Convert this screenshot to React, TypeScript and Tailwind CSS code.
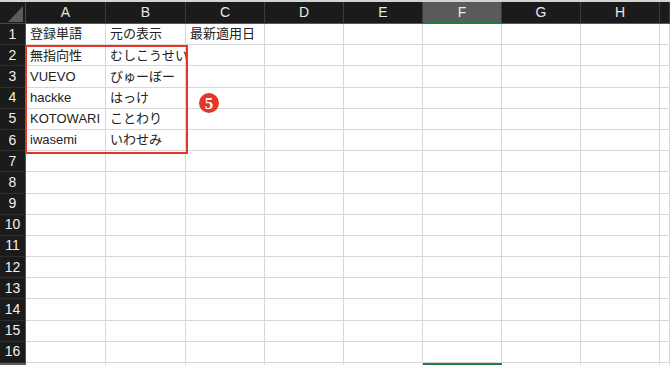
import React from "react";

const cols = [
  { l: "A", w: "w-[80px]" },
  { l: "B", w: "w-[80px]" },
  { l: "C", w: "w-[79px]" },
  { l: "D", w: "w-[79px]" },
  { l: "E", w: "w-[79px]" },
  { l: "F", w: "w-[79px]" },
  { l: "G", w: "w-[79px]" },
  { l: "H", w: "w-[79px]" },
  { l: "", w: "flex-1" },
];

const data: Record<number, string[]> = {
  1: ["登録単語", "元の表示", "最新適用日"],
  2: ["無指向性", "むしこうせい"],
  3: ["VUEVO", "びゅーぼー"],
  4: ["hackke", "はっけ"],
  5: ["KOTOWARI", "ことわり"],
  6: ["iwasemi", "いわせみ"],
};

const font = { fontFamily: '"Liberation Sans", "Noto Sans CJK JP", sans-serif' };

export default function App() {
  const rows = Array.from({ length: 17 }, (_, i) => i + 1);
  return (
    <div className="relative w-[670px] h-[365px] overflow-hidden bg-white" style={font}>
      <div className="h-[2px] bg-[#d4d4d4]" />
      {/* column header */}
      <div className="flex h-[22px] bg-[#1b1b1b]">
        <div className="relative w-[26px] shrink-0 border-r border-b border-[#4a4a4a]">
          <svg className="absolute left-[8px] top-[4px]" width="15" height="16" viewBox="0 0 15 16">
            <polygon points="0,16 15,16 15,0" fill="#5c5c5c" />
          </svg>
        </div>
        {cols.map((c, i) => (
          <div
            key={i}
            className={`${c.w} shrink-0 flex items-center justify-center text-[14px] text-[#e8e8e8] border-r border-[#3a3a3a] ${
              c.l === "F" ? "bg-[#5a5a5a] border-b-2 border-b-[#1f7a45]" : "border-b border-b-[#5a5a5a]"
            }`}
          >
            {c.l}
          </div>
        ))}
      </div>
      {/* rows */}
      {rows.map((r) => (
        <div key={r} className="flex h-[21.2px]">
          <div
            className={`w-[26px] shrink-0 flex items-center justify-center text-[14px] text-[#f0f0f0] border-b border-b-[#2e2e2e] ${
              r === 17 ? "bg-[#5a5a5a] border-r-2 border-r-[#1f7a45]" : "bg-[#1b1b1b] border-r border-r-[#555]"
            }`}
          >
            {r === 17 ? "" : r}
          </div>
          {cols.map((c, i) => {
            const sel = r === 17 && c.l === "F";
            return (
              <div
                key={i}
                className={`${c.w} shrink-0 flex items-center pl-[4px] text-[13px] text-[#222] whitespace-nowrap overflow-visible ${
                  sel ? "border-2 border-[#1f7a45]" : "border-r border-b border-[#d8d8d8]"
                }`}
              >
                {data[r]?.[i] ?? ""}
              </div>
            );
          })}
        </div>
      ))}
      {/* annotation box */}
      <div className="absolute left-[25px] top-[45px] w-[163px] h-[109px] border-[2.5px] border-[#e8352a]" />
      <div
        className="absolute left-[199px] top-[93px] w-[20px] h-[20px] rounded-full bg-[#e8352a] flex items-center justify-center text-white font-bold text-[17px] leading-none"
        style={{ fontFamily: '"Liberation Serif", serif' }}
      >
        5
      </div>
    </div>
  );
}
